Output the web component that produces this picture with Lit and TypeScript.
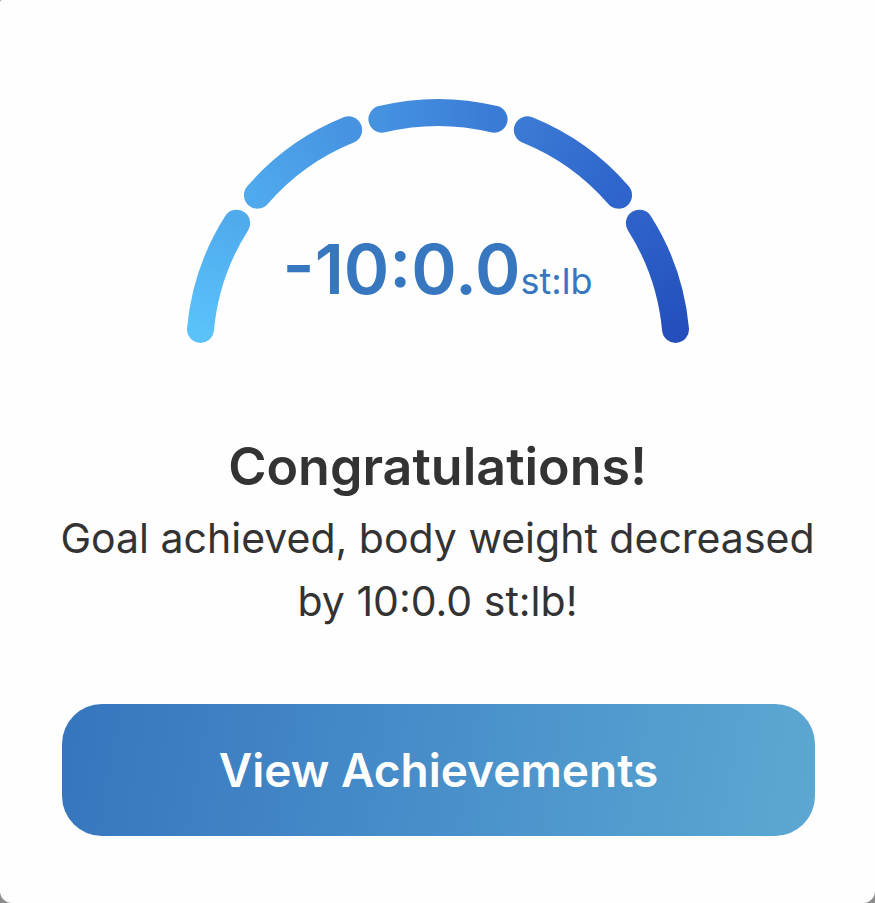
import { LitElement, html, svg, css } from 'lit';
import { customElement, property } from 'lit/decorators.js';

const RADIUS = 238.5;
const CENTER_X = 251;
const CENTER_Y = 252;
const START = 5.2;
const SPAN = 27.2;
const GAP = 8.4;

// x, y on the arc, 0deg is the left end
function pointAt(deg: number) {
  const rad = (deg * Math.PI) / 180;
  return {
    x: CENTER_X - RADIUS * Math.cos(rad),
    y: CENTER_Y - RADIUS * Math.sin(rad),
  };
}

@customElement('goal-gauge')
class GoalGauge extends LitElement {
  static styles = css`
    :host {
      display: grid;
      justify-items: center;
      color: #3777bf;
    }
    svg,
    .value {
      grid-area: 1 / 1;
    }
    svg {
      width: 502px;
      max-width: 100%;
      overflow: visible;
    }
    path {
      fill: none;
      stroke-width: 27;
      stroke-linecap: round;
    }
    .value {
      align-self: end;
      margin: 0;
      padding-bottom: 12px;
      font-size: 69px;
      line-height: 100px;
      font-weight: 600;
      white-space: nowrap;
    }
    .unit {
      font-size: 36px;
      font-weight: 400;
    }
  `;

  @property() value = '';
  @property() unit = '';

  colors = [
    ['#5ac1fa', '#50abed'],
    ['#4fa9ed', '#4693e1'],
    ['#4592e1', '#3a7bd5'],
    ['#3a79d4', '#2e64cb'],
    ['#2e62c9', '#244fbc'],
  ];

  renderSegment(colors: string[], i: number) {
    const from = pointAt(START + i * (SPAN + GAP));
    const to = pointAt(START + i * (SPAN + GAP) + SPAN);
    return svg`
      <linearGradient id="g${i}" gradientUnits="userSpaceOnUse"
        x1=${from.x} y1=${from.y} x2=${to.x} y2=${to.y}>
        <stop offset="0" stop-color=${colors[0]}></stop>
        <stop offset="1" stop-color=${colors[1]}></stop>
      </linearGradient>
      <path stroke="url(#g${i})"
        d="M${from.x} ${from.y}A${RADIUS} ${RADIUS} 0 0 1 ${to.x} ${to.y}"></path>
    `;
  }

  render() {
    return html`
      <svg viewBox="0 0 502 244" aria-hidden="true">
        ${this.colors.map((c, i) => this.renderSegment(c, i))}
      </svg>
      <p class="value">${this.value}<span class="unit">${this.unit}</span></p>
    `;
  }
}

@customElement('app-root')
class AppRoot extends LitElement {
  static styles = css`
    :host {
      display: block;
      background: #8c8c8c;
      font-family: Inter, "Liberation Sans", sans-serif;
      color: #333333;
    }
    .card {
      box-sizing: border-box;
      min-height: 100vh;
      padding: 99px 40px 67px;
      background: #fefefe;
      border-radius: 2px 0 12px 12px;
      text-align: center;
    }
    h1 {
      margin: 92px 0 0;
      font-size: 52px;
      line-height: 64px;
      font-weight: 600;
    }
    .message {
      margin: 8px 0 0;
      font-size: 41px;
      line-height: 63px;
    }
    .actions {
      padding: 71px 20px 0 22px;
    }
    button {
      display: block;
      width: 100%;
      height: 132px;
      border: none;
      border-radius: 40px;
      background: linear-gradient(100deg, #3575be, #488fca 50%, #5ca8d2);
      color: #ffffff;
      font: inherit;
      font-size: 46px;
      font-weight: 600;
      cursor: pointer;
    }
  `;

  render() {
    return html`
      <main class="card">
        <goal-gauge value="-10:0.0" unit="st:lb"></goal-gauge>
        <h1>Congratulations!</h1>
        <p class="message">Goal achieved, body weight decreased by 10:0.0 st:lb!</p>
        <div class="actions">
          <button type="button">View Achievements</button>
        </div>
      </main>
    `;
  }
}
